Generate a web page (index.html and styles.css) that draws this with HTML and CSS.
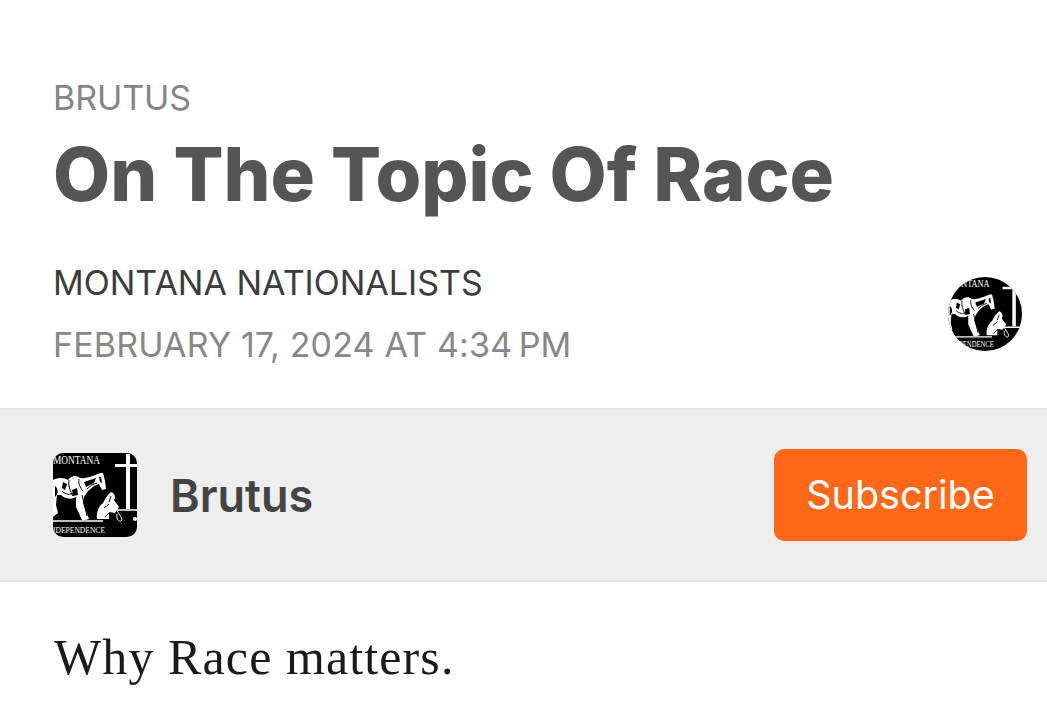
FILE: index.html
```html
<!DOCTYPE html>
<html lang="en">
<head>
    <meta charset="UTF-8">
    <meta name="viewport" content="width=device-width, initial-scale=1.0">
    <title>On The Topic Of Race - Brutus</title>
    <link rel="stylesheet" href="styles.css">
</head>
<body>
    <svg class="defs" width="0" height="0" aria-hidden="true">
        <symbol id="logo" viewBox="0 0 84 84">
            <rect width="84" height="84" fill="#000"/>
            <text x="0" y="11" class="logo-top" textLength="47" lengthAdjust="spacingAndGlyphs">MONTANA</text>
            <text x="0" y="80" class="logo-bottom" textLength="52" lengthAdjust="spacingAndGlyphs">IDEPENDENCE</text>
            <!-- cross -->
            <path d="M73 1h4v55h-4zM62 11h22v3H62z" fill="#fff"/>
            <!-- ground -->
            <path d="M0 68L50 68M58 57L84 57" stroke="#fff" stroke-width="1.5" fill="none"/>
            <circle cx="82" cy="66" r="2" fill="#fff"/>
            <!-- horse -->
            <path d="M0 27C6 24 12 25 15 27C18 22 24 22 27 25C34 26 42 22 47 20L50 20L52 28L53 36L49 37L46 31L41 33L35 38L31 44L30 50L36 66L32 67L27 52L23 44C18 47 12 46 8 42L4 42L3 52L5 60L0 64Z" fill="#fff"/>
            <path d="M23 44L23 54L29 67L33 67L27 50Z" fill="#fff"/>
            <path d="M31 29L43 25L41 30L33 34ZM2 33C5 35 6 40 2 44ZM10 29L14 31L12 37L9 35ZM19 37L24 35L25 42L20 43ZM46 24L48 24L49 30L47 29Z" fill="#000"/>
            <path d="M16 27C15 32 17 38 20 43M26 26C25 30 27 35 30 38M9 38C13 42 17 42 21 40M34 36C37 33 40 31 44 30M29 42L34 63" stroke="#000" stroke-width="1" fill="none"/>
            <!-- kneeling man -->
            <path d="M58 39C62 40 63 45 61 47L66 54L62 60L56 59L56 66L44 66C43 59 46 53 50 50C52 46 54 42 58 39z" fill="#fff"/>
            <path d="M51 55L56 51M52 64L56 60M58 43L56 49" stroke="#000" stroke-width="1" fill="none"/>
            <path d="M63 56C65 60 69 64 69 67C67 70 63 67 64 61" stroke="#fff" stroke-width="1" fill="none"/>
        </symbol>
    </svg>

    <header class="post-header">
        <div class="eyebrow">BRUTUS</div>
        <h1>On The Topic Of Race</h1>
        <div class="meta-row">
            <div class="meta">
                <div class="author">MONTANA NATIONALISTS</div>
                <div class="date">FEBRUARY 17, 2024 AT 4:34&#8201;PM</div>
            </div>
            <svg class="avatar"><use href="#logo"/></svg>
        </div>
    </header>

    <section class="pub-bar">
        <svg class="pub-logo"><use href="#logo"/></svg>
        <span class="pub-name">Brutus</span>
        <a class="btn" href="#">Subscribe</a>
    </section>

    <p class="body-text">Why Race matters.</p>
</body>
</html>
```

FILE: styles.css
```css
* {
    margin: 0;
    padding: 0;
    box-sizing: border-box;
}

html, body {
    height: 707px;
    overflow: hidden;
}

body {
    font-family: Inter, "Liberation Sans", sans-serif;
    background: white;
}

.defs {
    display: block;
}

.logo-top,
.logo-bottom {
    font-family: "Liberation Serif", serif;
    fill: #fff;
}

.logo-top {
    font-size: 11.5px;
}

.logo-bottom {
    font-size: 9px;
}

.post-header {
    height: 408px;
    padding: 76px 25px 0 53px;
}

.eyebrow {
    color: #858585;
    font-size: 34px;
    line-height: 44px;
    letter-spacing: -0.1px;
}

h1 {
    color: #555;
    font-size: 74px;
    font-weight: 800;
    line-height: 90px;
    margin-top: 9px;
}

.meta-row {
    display: flex;
    align-items: center;
    justify-content: space-between;
    margin-top: 42px;
}

.author {
    color: #3c3c3c;
    font-size: 34px;
    line-height: 44px;
}

.date {
    color: #888;
    font-size: 34px;
    line-height: 44px;
    margin-top: 18px;
    letter-spacing: 0.16px;
}

.avatar {
    width: 74px;
    height: 74px;
    border-radius: 50%;
}

.pub-bar {
    display: flex;
    align-items: center;
    height: 174px;
    padding: 0 20px 0 53px;
    background: #eee;
    border-top: 2px solid #e6e6e6;
    border-bottom: 2px solid #e6e6e6;
}

.pub-logo {
    width: 84px;
    height: 84px;
    border-radius: 10px;
}

.pub-name {
    color: #444;
    font-size: 45px;
    font-weight: 600;
    margin-left: 33px;
}

.btn {
    display: flex;
    align-items: center;
    justify-content: center;
    width: 253px;
    height: 92px;
    margin-left: auto;
    background: #ff6719;
    color: white;
    border-radius: 10px;
    font-size: 39.5px;
    text-decoration: none;
}

.body-text {
    font-family: "Liberation Serif", serif;
    color: #1a1a1a;
    font-size: 50px;
    line-height: 60px;
    letter-spacing: 1.1px;
    padding: 45px 54px 0;
}
```
